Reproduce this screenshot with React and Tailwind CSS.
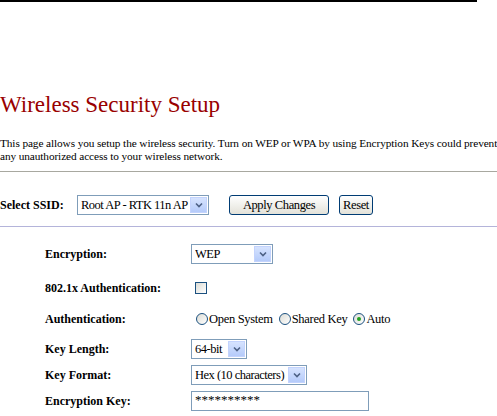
import React from "react";

const serif = { fontFamily: '"Liberation Serif", "Times New Roman", serif' };

const Arrow = () => (
  <div className="w-[17px] h-full flex items-center justify-center bg-gradient-to-b from-[#d6e3fe] to-[#b5cbfa] border border-[#c3d3fd]">
    <svg width="8" height="6" viewBox="0 0 8 6">
      <path d="M1 1.5 L4 4.5 L7 1.5" fill="none" stroke="#4d6185" strokeWidth="1.6" />
    </svg>
  </div>
);

const Select = ({ value, width }) => (
  <div
    className="h-[20px] flex items-center border border-[#7f9db9] bg-white pl-[3px] pr-px py-px"
    style={{ width }}
  >
    <span className="flex-1 text-[12.5px] leading-none tracking-[-0.5px] whitespace-nowrap overflow-hidden">{value}</span>
    <Arrow />
  </div>
);

const Button = ({ children, width }) => (
  <div
    className="h-[20px] flex items-center justify-center rounded-[3px] border border-[#003c74] bg-gradient-to-b from-white to-[#e3e2d9] text-[12.5px] leading-none tracking-[-0.4px]"
    style={{ width }}
  >
    {children}
  </div>
);

const Radio = ({ checked }) => (
  <span className="w-[12px] h-[12px] rounded-full border border-[#1c5180] bg-gradient-to-br from-[#dcdcd5] to-white flex items-center justify-center">
    {checked && <span className="w-[4px] h-[4px] rounded-full bg-[#21a121]" />}
  </span>
);

const Row = ({ label, children, className }) => (
  <div className={`h-[26px] flex items-center ${className}`}>
    <div className="w-[191px] pl-[45px] text-[12px] font-bold whitespace-nowrap">{label}</div>
    {children}
  </div>
);

export default function App() {
  return (
    <div className="w-[497px] h-[416px] bg-white text-black overflow-hidden" style={serif}>
      <div className="h-[2px] w-[477px] bg-black" />
      <h1 className="mt-[90px] text-[23px] leading-[26px] text-[#990000] whitespace-nowrap">
        Wireless Security Setup
      </h1>
      <p className="mt-[19px] text-[11.3px] leading-[13px] whitespace-nowrap tracking-[-0.1px]">
        This page allows you setup the wireless security. Turn on WEP or WPA by using Encryption Keys could prevent
        <br />
        any unauthorized access to your wireless network.
      </p>
      <div className="mt-[8px] h-px bg-[#a8a8a0]" />

      <div className="mt-[23px] h-[20px] flex items-center">
        <div className="w-[77px] text-[12px] font-bold whitespace-nowrap">Select SSID:</div>
        <Select value="Root AP - RTK 11n AP" width={132} />
        <div className="ml-[20px]">
          <Button width={100}>Apply Changes</Button>
        </div>
        <div className="ml-[10px]">
          <Button width={34}>Reset</Button>
        </div>
      </div>
      <div className="mt-[11px] h-px bg-[#b4b4da]" />

      <Row label="Encryption:" className="mt-[14px]">
        <Select value="WEP" width={82} />
      </Row>
      <Row label="802.1x Authentication:" className="mt-[8px]">
        <span className="ml-[4px] w-[12px] h-[12px] border border-[#1c5180] bg-gradient-to-br from-[#dcdcd5] to-white" />
      </Row>
      <Row label="Authentication:" className="mt-[5px]">
        <div className="ml-[5px] flex items-center text-[12.5px] tracking-[-0.3px] whitespace-nowrap">
          <Radio />
          <span className="ml-px">Open System</span>
          <span className="ml-[6px]"><Radio /></span>
          <span className="ml-px">Shared Key</span>
          <span className="ml-[6px]"><Radio checked /></span>
          <span className="ml-px">Auto</span>
        </div>
      </Row>
      <Row label="Key Length:" className="mt-[4px]">
        <Select value="64-bit" width={56} />
      </Row>
      <Row label="Key Format:">
        <Select value="Hex (10 characters)" width={116} />
      </Row>
      <Row label="Encryption Key:">
        <div className="w-[178px] h-[20px] border border-[#7f9db9] bg-white pl-[3px] text-[13px] leading-[16px]">
          **********
        </div>
      </Row>
    </div>
  );
}
